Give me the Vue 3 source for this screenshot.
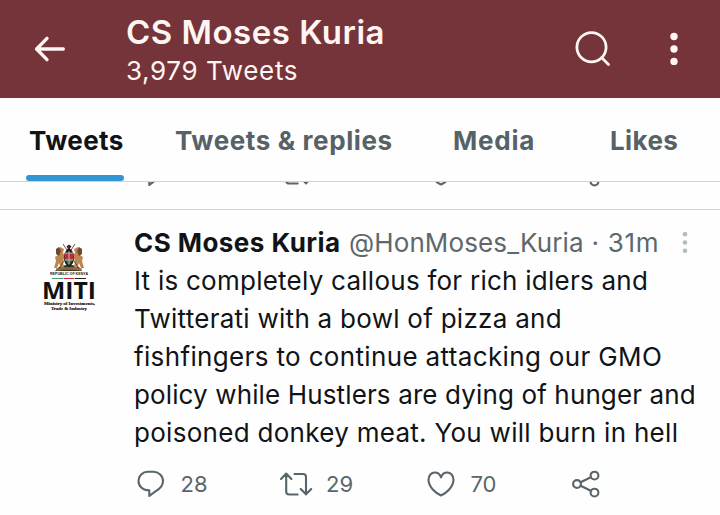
<script setup>
const tabs = [
  { label: 'Tweets', cls: 'tab-tweets', active: true },
  { label: 'Tweets & replies', cls: 'tab-replies' },
  { label: 'Media', cls: 'tab-media' },
  { label: 'Likes', cls: 'tab-likes' },
]
const lines = [
  'It is completely callous for rich idlers and',
  'Twitterati with a bowl of pizza and',
  'fishfingers to continue attacking our GMO',
  'policy while Hustlers are dying of hunger and',
  'poisoned donkey meat. You will burn in hell',
]
const icons = {
  reply: 'M10.8 1.8h5.4c5.4 0 9.8 3.9 9.8 9.1 0 4.7-3.2 8-7.6 10.4L12.3 26v-5.6C5.9 20.4 1.5 16.4 1.5 10.9 1.5 5.7 5.5 1.8 10.8 1.8z',
  heart: 'M14 25.5C9.5 23.6 1.5 17.2 1.5 9.7c0-4.2 2.9-7.2 6.3-7.2 2.9 0 5.1 1.8 6.2 4.8 1.1-3 3.3-4.8 6.2-4.8 3.4 0 6.3 3 6.3 7.2 0 7.5-8 13.9-12.5 15.8z',
}
const actions = [
  { name: 'reply', count: '28' },
  { name: 'retweet', count: '29' },
  { name: 'heart', count: '70' },
  { name: 'share', count: '' },
]
const rows = [
  { cls: 'previous', counts: false },
  { cls: 'current', counts: true },
]
</script>

<template>
  <div class="screen">
    <header class="bar">
      <svg class="back" width="32" height="28" viewBox="0 0 32 28"><path d="M29.300 14H3M13 3.400L2.600 14l10.400 10.600" /></svg>
      <div class="heading">
        <h1><span>CS Moses Kuria</span></h1>
        <p><span>3,979 Tweets</span></p>
      </div>
      <svg class="search" width="36" height="36" viewBox="0 0 36 36"><circle cx="16.500" cy="16.200" r="14.600" /><path d="M27 27l6.500 6.500" /></svg>
      <svg class="dots" width="8" height="34" viewBox="0 0 8 34"><circle cx="4" cy="4.500" r="3.700" /><circle cx="4" cy="17" r="3.700" /><circle cx="4" cy="29.400" r="3.700" /></svg>
    </header>

    <nav class="tabs">
      <div v-for="t in tabs" :key="t.label" class="tab" :class="[t.cls, { active: t.active }]"><span>{{ t.label }}</span></div>
    </nav>

    <main>
      <div v-for="row in rows" :key="row.cls" :class="row.cls">
        <article v-if="row.counts" class="tweet">
          <svg class="avatar" width="60" height="72" viewBox="0 0 60 72">
            <path d="M19 24l10-3 10 3 3 4H15z" fill="#3f3d2a" />
            <path d="M16 8l4-4 4 2-1 4 2 3-2 5 1 7h-3l-2-5-2 5h-3l2-7-1-4 3-2z" fill="#bb8650" />
            <path d="M42 8l-4-4-4 2 1 4-2 3 2 5-1 7h3l2-5 2 5h3l-2-7 1-4-3-2z" fill="#bb8650" />
            <path d="M16 6l3-2 2 4-2 5-3-2zM42 6l-3-2-2 4 2 5 3-2z" fill="#71482f" />
            <path d="M20 24L35 1M38 24L23 1" stroke="#6b4036" stroke-width=".9" />
            <path d="M29 5c5 3 6 9 4 15l-4 5-4-5c-2-6-1-12 4-15z" fill="#1b1a1b" />
            <path d="M24.500 10h9.200v7h-9.200z" fill="#b5303a" />
            <path d="M25 17h8l-4 6z" fill="#34613c" />
            <path d="M29 8v13M24.500 10h9M25 17h8" stroke="#ede3d9" stroke-width=".7" />
            <path d="M26.500 3.500l2.500-2 2.500 2-2 2.500h-1.500z" fill="#3a2424" />
            <path d="M16 25.500q13-3 26 0l-1 2.500q-12-2.500-24 0z" fill="#8a6840" />
            <text x="29" y="32.300" class="republic" textLength="38" lengthAdjust="spacingAndGlyphs">REPUBLIC OF KENYA</text>
            <path d="M12 35.500h11" stroke="#4b9a68" stroke-width="1" />
            <path d="M23.500 35.500h11" stroke="#c42b36" stroke-width="1" />
            <path d="M35 35.500h11" stroke="#222" stroke-width="1" />
            <text x="29" y="56" class="miti" textLength="54" lengthAdjust="spacingAndGlyphs">MITI</text>
            <text x="29.500" y="62" class="ministry" textLength="51" lengthAdjust="spacingAndGlyphs">Ministry of Investments,</text>
            <text x="29" y="67" class="ministry" textLength="36" lengthAdjust="spacingAndGlyphs">Trade &amp; Industry</text>
          </svg>
          <div class="content">
            <div class="byline">
              <span class="name">CS Moses Kuria</span>
              <span class="handle">@HonMoses_Kuria</span>
              <span class="age">· 31m</span>
              <svg class="more" width="6" height="22" viewBox="0 0 6 22"><circle cx="3" cy="2.200" r="2.300" /><circle cx="3" cy="10.500" r="2.300" /><circle cx="3" cy="18.700" r="2.300" /></svg>
            </div>
            <p v-for="(l, i) in lines" :key="l" class="line" :class="'line-' + i"><span>{{ l }}</span></p>
          </div>
        </article>
        <div class="actions">
          <div v-for="a in actions" :key="a.name" class="action" :class="a.name">
            <svg v-if="a.name === 'retweet'" width="34" height="28" viewBox="0 0 34 28"><path d="M2 9L7.200 3.600l5.200 5.400M7.200 4v17.500q0 3 3 3h8.500M15.500 4H24q3 0 3 3v17.500M21.700 18.900L27 24.300l5.200-5.400" /></svg>
            <svg v-else-if="a.name === 'share'" width="28" height="28" viewBox="0 0 28 28"><circle cx="5" cy="14" r="3.900" /><circle cx="22.500" cy="5.600" r="3.900" /><circle cx="22.500" cy="22.600" r="3.900" /><path d="M8.600 12.200l10.200-4.900M8.600 15.800l10.200 5" /></svg>
            <svg v-else width="28" height="28" viewBox="0 0 28 28"><path :d="icons[a.name]" /></svg>
            <span v-if="row.counts && a.count">{{ a.count }}</span>
          </div>
        </div>
      </div>
    </main>
  </div>
</template>

<style>
body { margin: 0; background: #fff; }
</style>

<style scoped>
.screen { width: 720px; height: 515px; overflow: hidden; background: #fefefe; font-family: Inter, "Liberation Sans", sans-serif; color: #101416; white-space: nowrap; }
svg { display: block; flex: none; }
h1, p { margin: 0; }
.bar { box-sizing: border-box; height: 98px; background: #743439; color: #fff5f2; display: flex; padding-left: 34px; }
.back { margin-top: 35px; }
.back path, .search { fill: none; stroke: #fff5f2; stroke-width: 3.4; stroke-linecap: round; stroke-linejoin: round; }
.search { stroke-width: 2.8; margin-top: 31px; }
.heading { width: 449px; margin-left: 60px; padding-top: 12px; }
h1 { font-size: 33px; line-height: 40px; font-weight: 600; letter-spacing: 0.5px; margin-bottom: 1px; }
.heading p { font-size: 26px; line-height: 36px; letter-spacing: 0.63px; }
.dots { margin: 32px 0 0 59px; fill: #fff5f2; }
.tabs { box-sizing: border-box; height: 84px; border-bottom: 1px solid #cfd5d6; display: flex; padding-left: 26px; font-size: 26px; font-weight: 700; color: #566267; }
.tab { box-sizing: border-box; height: 83px; padding: 24px 0 0 3px; line-height: 38px; letter-spacing: 0.4px; }
.tab-tweets { width: 98px; }
.tab-replies { margin-left: 48px; width: 278px; letter-spacing: 0.6px; }
.tab-media { width: 157px; letter-spacing: 0.8px; }
.active { color: #101416; display: flex; flex-direction: column; justify-content: space-between; }
.active::after { content: ""; width: 98px; height: 6px; border-radius: 3px; background: #3296d4; margin-left: -3px; }
.previous { box-sizing: border-box; height: 28px; border-bottom: 1px solid #cfd5d6; overflow: hidden; display: flex; flex-direction: column; justify-content: flex-end; padding-bottom: 22px; }
.tweet { display: flex; height: 243px; padding-left: 40px; }
.avatar { margin-top: 33px; }
.republic { font: 700 4px "Liberation Sans", sans-serif; text-anchor: middle; fill: #222; }
.miti { font: 700 23.5px "Open Sans", sans-serif; text-anchor: middle; fill: #111; }
.ministry { font: 700 4.3px "Liberation Serif", serif; text-anchor: middle; fill: #111; stroke: #111; stroke-width: .15; }
.content { margin-left: 34px; padding-top: 13px; width: 570px; font-size: 26px; }
.byline { display: flex; height: 39px; line-height: 39px; }
.name { width: 215px; font-weight: 700; letter-spacing: 0.45px; }
.handle { width: 242.5px; color: #5c686d; letter-spacing: 0.12px; }
.age { width: 90.5px; color: #5c686d; letter-spacing: 0.7px; }
.more { fill: #b3bcc0; margin-top: 9px; }
.line { line-height: 38px; height: 38px; }
.line-0 { letter-spacing: 0.25px; }
.line-1 { letter-spacing: 0.27px; }
.line-2 { letter-spacing: 0.35px; }
.line-3 { letter-spacing: 0.13px; }
.line-4 { letter-spacing: 0.29px; }
.actions { display: flex; height: 28px; padding-left: 137px; flex: none; }
.current .actions { margin-top: 17px; }
.action { display: flex; align-items: center; font-size: 22px; line-height: 28px; color: #5a666b; }
.action svg { fill: none; stroke: #59656a; stroke-width: 2.1; stroke-linecap: round; stroke-linejoin: round; }
.reply { width: 142px; }
.retweet { width: 148px; }
.heart { width: 145px; }
.action span { margin-left: 15.5px; }
.retweet span { margin-left: 13px; }
</style>
